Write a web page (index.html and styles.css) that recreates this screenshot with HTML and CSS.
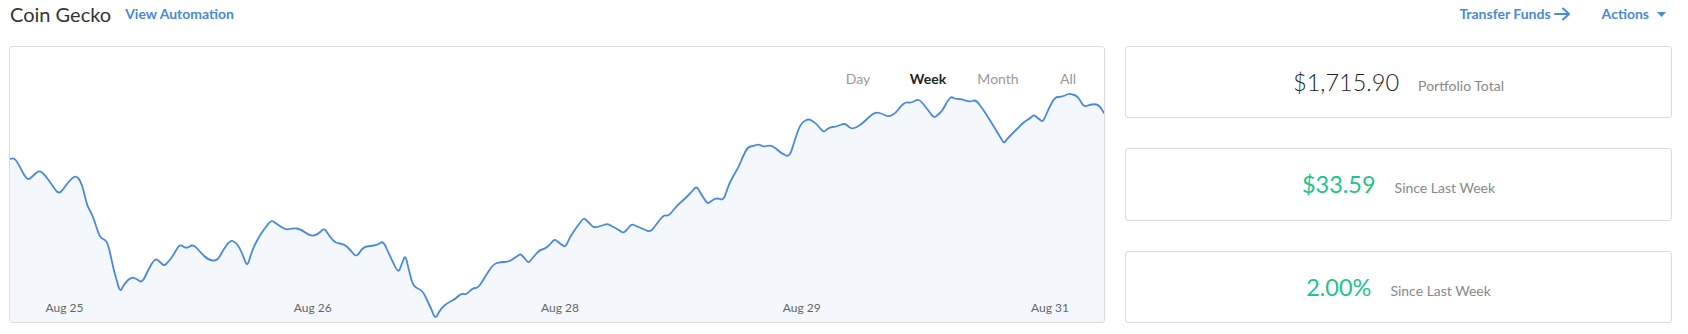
FILE: index.html
```html
<!DOCTYPE html>
<html lang="en">
<head>
<meta charset="utf-8">
<title>Coin Gecko</title>
<link rel="stylesheet" href="styles.css">
</head>
<body>
<div class="page">
  <header class="topbar">
    <div class="topbar-left">
      <h1 class="title">Coin Gecko</h1>
      <a class="link" href="#">View Automation</a>
    </div>
    <div class="topbar-right">
      <a class="link link-icon" href="#">Transfer Funds
        <svg class="arrow" width="17" height="14" viewBox="0 0 17 14"><path d="M1 7H15M9 1.5L15 7L9 12.5" fill="none" stroke="currentColor" stroke-width="2" stroke-linecap="round" stroke-linejoin="round"/></svg>
      </a>
      <a class="link link-icon" href="#">Actions
        <svg class="caret" width="9" height="5" viewBox="0 0 9 5"><path d="M0 0H9L4.5 5Z" fill="currentColor"/></svg>
      </a>
    </div>
  </header>
  <main class="grid">
    <section class="chart-card">
      <svg class="chart-svg" viewBox="10 47 1093 275" preserveAspectRatio="none">
        <defs>
          <path id="series" d="M10,159 L12,158.5 Q14,158 16,160.5 Q18,163 22.5,172 Q27,181 30,178.5 Q33,176 36,173 Q39,170 42,172.5 Q45,175 48.5,180 Q52,185 55.5,190 Q59,195 62.5,190 Q66,185 69,181.5 Q72,178 74,177 Q76,176 78,178 Q80,180 82,186 Q84,192 85.5,199 Q87,206 89.5,210 Q92,214 94,220 Q96,226 98,232 Q100,238 103,239 Q106,240 107.5,244 Q109,248 111.5,260 Q114,272 117,281.5 Q120,295 122.5,287 Q125,283 128,280 Q131,277 134,278 Q137,279 139.5,281 Q142,283 145,276.5 Q148,270 151.5,264 Q155,258 157.5,260 Q160,262 162,264 Q164,266 166,264 Q168,262 170,259.5 Q172,257 174,253.5 Q176,250 178,247 Q180,244 183,246.5 Q186,249 189.5,246.5 Q193,244 196.5,248 Q200,252 204,256 Q208,260 212.5,260.5 Q217,261 220,255.5 Q223,250 226.5,245 Q230,240 232.5,241 Q235,242 237,244.5 Q239,247 241,251.5 Q243,256 245,261.5 Q247,268 249.5,258.5 Q252,250 255,244 Q258,238 261,233.5 Q264,229 267.5,224.5 Q271,219 274.5,222.5 Q278,225 282,227.5 Q286,230 289.5,229 Q293,228 296.5,228.5 Q300,229 305,232.5 Q310,236 313.5,235.5 Q317,235 320.5,231.5 Q324,227 326.5,232 Q329,236 332,239.5 Q335,243 339.5,243.5 Q344,244 347,247 Q350,250 353,253.5 Q356,258 359.5,252 Q363,247 366.5,246.5 Q370,246 373.5,245.5 Q377,245 380,243 Q383,240 386.5,249 Q390,257 394,265 Q398,274 399.5,269 Q401,265 403,260 Q405,253 407,263.5 Q409,272 411,279.5 Q413,287 417.5,288.5 Q422,290 425,296.5 Q428,303 431.5,310.5 Q435,322 438,313 Q441,308 444,305.5 Q447,303 451,301 Q455,299 458,296 Q461,293 463.5,294 Q466,295 469,291.5 Q472,288 475,288 Q478,288 481.5,282 Q485,276 489,270 Q493,264 496.5,263 Q500,262 504,262 Q508,262 511,260 Q514,258 517,256 Q520,253 522,256 Q524,258 526,260.5 Q528,264 530.5,260 Q533,257 536,253.5 Q539,250 541.5,249.5 Q544,249 546.5,247 Q549,245 551.5,242 Q554,238 557,241.5 Q560,244 562.5,245.5 Q565,248 567.5,241.5 Q570,236 573.5,231 Q577,226 580,222 Q583,217 585.5,220 Q588,222 590.5,225 Q593,228 596.5,227 Q600,226 603.5,225 Q607,223 611,226 Q615,228 619,230.5 Q623,234 625,231 Q627,229 629,226.5 Q631,223 635.5,226 Q640,228 645,230 Q650,233 653,228 Q656,224 659.5,219.5 Q663,215 665.5,215.5 Q668,216 670,213.5 Q672,211 674.5,208 Q677,205 680.5,202 Q684,199 687,196 Q690,193 693,189.5 Q696,185 698.5,190.5 Q701,195 704,199.5 Q707,205 709.5,202 Q712,200 714,199 Q716,198 719.5,199 Q723,201 725.5,192.5 Q728,185 730,181 Q732,177 735,172 Q738,167 740,162 Q742,157 744.5,152 Q747,147 750,146.5 Q753,146 755.5,145 Q758,144 760.5,145.5 Q763,147 766,146 Q769,145 772,146.5 Q775,148 777.5,150.5 Q780,153 784.5,155 Q789,158 791.5,148.5 Q794,140 797,131.5 Q800,123 804,121 Q808,118 811.5,121 Q815,123 817,125.5 Q819,128 821,130 Q823,133 826,129.5 Q829,127 832,127 Q835,127 839.5,125 Q844,123 846,125 Q848,127 850,128 Q852,129 856,127 Q860,125 864,121 Q868,117 871.5,114.5 Q875,112 878.5,113 Q882,114 885,115.5 Q888,117 891.5,115 Q895,113 897.5,109.5 Q900,106 902.5,104 Q905,102 907.5,102.5 Q910,103 914,101 Q918,98 921.5,103 Q925,107 929,112.5 Q933,119 935.5,116 Q938,114 940,112 Q942,110 944,106 Q946,102 948,99.5 Q950,96 952.5,98 Q955,99 958,99 Q961,99 964.5,100.5 Q968,102 971.5,101 Q975,99 978.5,104.5 Q982,109 984.5,113 Q987,117 989.5,121 Q992,125 995,130 Q998,135 1000.5,139 Q1003,145 1005.5,140 Q1008,137 1010,135 Q1012,133 1015,130 Q1018,127 1020.5,124.5 Q1023,122 1025.5,120.5 Q1028,119 1030.5,117 Q1033,114 1035.5,117 Q1038,119 1040,120.5 Q1042,123 1045,115 Q1048,108 1051,102.5 Q1054,97 1057,97 Q1060,97 1064,95.5 Q1068,93 1071.5,94.5 Q1075,95 1077,97.5 Q1079,100 1081,103.5 Q1083,107 1085.5,106 Q1088,105 1090.5,104.5 Q1093,104 1095.5,104.5 Q1098,105 1100.5,109 L1103,113"/>
        </defs>
        <path class="area" d="M10,159 L12,158.5 Q14,158 16,160.5 Q18,163 22.5,172 Q27,181 30,178.5 Q33,176 36,173 Q39,170 42,172.5 Q45,175 48.5,180 Q52,185 55.5,190 Q59,195 62.5,190 Q66,185 69,181.5 Q72,178 74,177 Q76,176 78,178 Q80,180 82,186 Q84,192 85.5,199 Q87,206 89.5,210 Q92,214 94,220 Q96,226 98,232 Q100,238 103,239 Q106,240 107.5,244 Q109,248 111.5,260 Q114,272 117,281.5 Q120,295 122.5,287 Q125,283 128,280 Q131,277 134,278 Q137,279 139.5,281 Q142,283 145,276.5 Q148,270 151.5,264 Q155,258 157.5,260 Q160,262 162,264 Q164,266 166,264 Q168,262 170,259.5 Q172,257 174,253.5 Q176,250 178,247 Q180,244 183,246.5 Q186,249 189.5,246.5 Q193,244 196.5,248 Q200,252 204,256 Q208,260 212.5,260.5 Q217,261 220,255.5 Q223,250 226.5,245 Q230,240 232.5,241 Q235,242 237,244.5 Q239,247 241,251.5 Q243,256 245,261.5 Q247,268 249.5,258.5 Q252,250 255,244 Q258,238 261,233.5 Q264,229 267.5,224.5 Q271,219 274.5,222.5 Q278,225 282,227.5 Q286,230 289.5,229 Q293,228 296.5,228.5 Q300,229 305,232.5 Q310,236 313.5,235.5 Q317,235 320.5,231.5 Q324,227 326.5,232 Q329,236 332,239.5 Q335,243 339.5,243.5 Q344,244 347,247 Q350,250 353,253.5 Q356,258 359.5,252 Q363,247 366.5,246.5 Q370,246 373.5,245.5 Q377,245 380,243 Q383,240 386.5,249 Q390,257 394,265 Q398,274 399.5,269 Q401,265 403,260 Q405,253 407,263.5 Q409,272 411,279.5 Q413,287 417.5,288.5 Q422,290 425,296.5 Q428,303 431.5,310.5 Q435,322 438,313 Q441,308 444,305.5 Q447,303 451,301 Q455,299 458,296 Q461,293 463.5,294 Q466,295 469,291.5 Q472,288 475,288 Q478,288 481.5,282 Q485,276 489,270 Q493,264 496.5,263 Q500,262 504,262 Q508,262 511,260 Q514,258 517,256 Q520,253 522,256 Q524,258 526,260.5 Q528,264 530.5,260 Q533,257 536,253.5 Q539,250 541.5,249.5 Q544,249 546.5,247 Q549,245 551.5,242 Q554,238 557,241.5 Q560,244 562.5,245.5 Q565,248 567.5,241.5 Q570,236 573.5,231 Q577,226 580,222 Q583,217 585.5,220 Q588,222 590.5,225 Q593,228 596.5,227 Q600,226 603.5,225 Q607,223 611,226 Q615,228 619,230.5 Q623,234 625,231 Q627,229 629,226.5 Q631,223 635.5,226 Q640,228 645,230 Q650,233 653,228 Q656,224 659.5,219.5 Q663,215 665.5,215.5 Q668,216 670,213.5 Q672,211 674.5,208 Q677,205 680.5,202 Q684,199 687,196 Q690,193 693,189.5 Q696,185 698.5,190.5 Q701,195 704,199.5 Q707,205 709.5,202 Q712,200 714,199 Q716,198 719.5,199 Q723,201 725.5,192.5 Q728,185 730,181 Q732,177 735,172 Q738,167 740,162 Q742,157 744.5,152 Q747,147 750,146.5 Q753,146 755.5,145 Q758,144 760.5,145.5 Q763,147 766,146 Q769,145 772,146.5 Q775,148 777.5,150.5 Q780,153 784.5,155 Q789,158 791.5,148.5 Q794,140 797,131.5 Q800,123 804,121 Q808,118 811.5,121 Q815,123 817,125.5 Q819,128 821,130 Q823,133 826,129.5 Q829,127 832,127 Q835,127 839.5,125 Q844,123 846,125 Q848,127 850,128 Q852,129 856,127 Q860,125 864,121 Q868,117 871.5,114.5 Q875,112 878.5,113 Q882,114 885,115.5 Q888,117 891.5,115 Q895,113 897.5,109.5 Q900,106 902.5,104 Q905,102 907.5,102.5 Q910,103 914,101 Q918,98 921.5,103 Q925,107 929,112.5 Q933,119 935.5,116 Q938,114 940,112 Q942,110 944,106 Q946,102 948,99.5 Q950,96 952.5,98 Q955,99 958,99 Q961,99 964.5,100.5 Q968,102 971.5,101 Q975,99 978.5,104.5 Q982,109 984.5,113 Q987,117 989.5,121 Q992,125 995,130 Q998,135 1000.5,139 Q1003,145 1005.5,140 Q1008,137 1010,135 Q1012,133 1015,130 Q1018,127 1020.5,124.5 Q1023,122 1025.5,120.5 Q1028,119 1030.5,117 Q1033,114 1035.5,117 Q1038,119 1040,120.5 Q1042,123 1045,115 Q1048,108 1051,102.5 Q1054,97 1057,97 Q1060,97 1064,95.5 Q1068,93 1071.5,94.5 Q1075,95 1077,97.5 Q1079,100 1081,103.5 Q1083,107 1085.5,106 Q1088,105 1090.5,104.5 Q1093,104 1095.5,104.5 Q1098,105 1100.5,109 L1103,113 L1103,322 L10,322 Z"/>
        <use class="line" href="#series"/>
        <g class="axis">
          <text x="64.5" y="312">Aug 25</text>
          <text x="312.5" y="312">Aug 26</text>
          <text x="559.5" y="312">Aug 28</text>
          <text x="801" y="312">Aug 29</text>
          <text x="1049" y="312">Aug 31</text>
        </g>
      </svg>
      <nav class="ranges">
        <span class="range">Day</span>
        <span class="range active">Week</span>
        <span class="range">Month</span>
        <span class="range">All</span>
      </nav>
    </section>
    <aside class="stats">
      <div class="stat-card">
        <span class="stat-value">$1,715.90</span>
        <span class="stat-label">Portfolio Total</span>
      </div>
      <div class="stat-card">
        <span class="stat-value positive">$33.59</span>
        <span class="stat-label">Since Last Week</span>
      </div>
      <div class="stat-card">
        <span class="stat-value positive">2.00%</span>
        <span class="stat-label">Since Last Week</span>
      </div>
    </aside>
  </main>
</div>
</body>
</html>
```
FILE: styles.css
```css
* { box-sizing: border-box; }
html, body { margin: 0; padding: 0; background: #ffffff; }
body {
  font-family: Lato, "Open Sans", "Liberation Sans", sans-serif;
  color: #333333;
  width: 1688px;
  height: 334px;
  overflow: hidden;
}
.page {
  padding: 0 16px 0 9px;
}
.topbar {
  height: 28px;
  margin-bottom: 18px;
  display: flex;
  align-items: center;
  justify-content: space-between;
  padding-right: 6px;
}
.topbar-left {
  display: flex;
  align-items: center;
  gap: 14px;
}
.title {
  margin: 0 0 0 1px;
  font-size: 20px;
  font-weight: 400;
  color: #333333;
  line-height: 28px;
}
.link {
  color: #4a89d8;
  font-weight: 700;
  font-size: 14px;
  text-decoration: none;
  line-height: 20px;
}
.topbar-right {
  display: flex;
  align-items: center;
  gap: 31px;
}
.link-icon {
  display: flex;
  align-items: center;
  gap: 3px;
}
.caret { margin-left: 5px; margin-top: 1px; }
.grid {
  display: grid;
  grid-template-columns: 1096px 547px;
  column-gap: 20px;
  height: 277px;
}
.chart-card {
  position: relative;
  border: 1px solid #dcdcdc;
  border-radius: 3px;
  overflow: hidden;
}
.chart-svg {
  display: block;
  width: 100%;
  height: 100%;
}
.area { fill: #f4f8fd; stroke: none; }
.line {
  fill: none;
  stroke: #4a89dc;
  stroke-width: 1.8;
  stroke-linejoin: round;
  stroke-linecap: round;
}
.axis text {
  font-family: Lato, "Open Sans", "Liberation Sans", sans-serif;
  font-size: 12px;
  fill: #666666;
  text-anchor: middle;
}
.ranges {
  position: absolute;
  top: 22px;
  right: 1px;
  display: flex;
}
.range {
  width: 70px;
  text-align: center;
  font-size: 14px;
  line-height: 20px;
  color: #999999;
}
.range.active {
  color: #222222;
  font-weight: 700;
}
.stats {
  display: grid;
  grid-template-rows: repeat(3, 1fr);
  row-gap: 30px;
}
.stat-card {
  border: 1px solid #dcdcdc;
  border-radius: 3px;
  display: flex;
  align-items: baseline;
  justify-content: center;
  gap: 19px;
  padding-top: 20px;
}
.stat-value {
  font-size: 23.5px;
  font-weight: 300;
  color: #222222;
  line-height: 30px;
}
.stat-value.positive {
  color: #22c38e;
  font-weight: 400;
}
.stat-label {
  font-size: 14px;
  color: #888888;
}
```
